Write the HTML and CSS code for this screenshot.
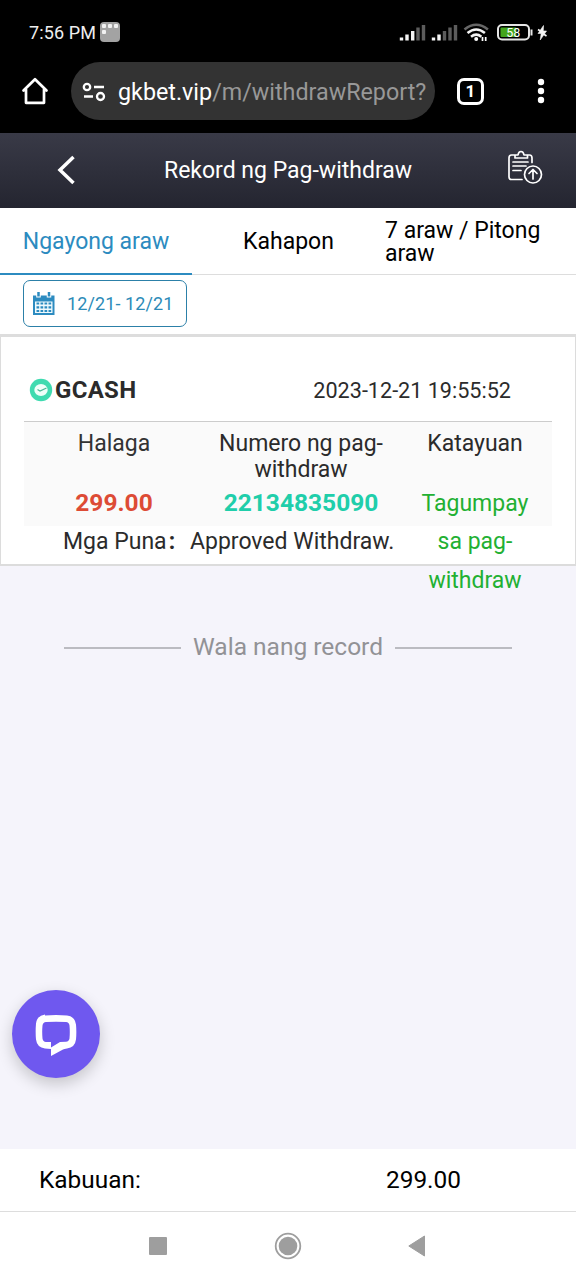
FILE: index.html
```html
<!DOCTYPE html>
<html lang="fil">
<head>
<meta charset="utf-8">
<title>Rekord ng Pag-withdraw</title>
<link rel="stylesheet" href="styles.css">
</head>
<body>
<div class="status">
  <span class="time">7:56 PM</span>
  <svg class="app" width="20" height="20" viewBox="0 0 20 20"><rect width="20" height="20" rx="4" fill="#a3a3a3"/><g fill="#f2f2f2"><rect x="2" y="2" width="4" height="4" rx="1"/><rect x="8" y="2" width="4" height="4" rx="1"/><rect x="14" y="2" width="4" height="4" rx="1"/><rect x="2" y="8" width="4" height="4" rx="1"/></g></svg>
  <svg class="signals" width="150" height="22" viewBox="398 21 150 22">
    <g stroke-width="3.400"><path stroke="#f4f4f4" d="M401.500 40.500v-3M407 40.500v-6M412.700 40.500v-9.500"/><path stroke="#5c5c5c" d="M418 40.500v-13M423.500 40.500v-15.500"/><path stroke="#f4f4f4" d="M433.500 40.500v-3M439 40.500v-6"/><path stroke="#5c5c5c" d="M444.500 40.500v-9.500M450 40.500v-13M455.500 40.500v-15.500"/></g>
    <g fill="none" stroke-width="2.600"><path stroke="#666" d="M464.500 29.500q11.700-9.500 23.400 0"/><path stroke="#f4f4f4" d="M467.500 33q8.700-7 17.400 0M471 36.700q5.200-4 10.400 0"/></g>
    <circle cx="476.200" cy="39" r="2" fill="#fff"/><path d="M482.500 41v-4M485.700 37v4" stroke="#fff" stroke-width="1.700"/>
    <rect x="498" y="25" width="31" height="14.500" rx="4" fill="none" stroke="#e6e6e6" stroke-width="2"/><rect x="500.500" y="27.500" width="16" height="9.500" rx="1" fill="#43a51c"/><path d="M531.500 29.500v6" stroke="#e6e6e6" stroke-width="2"/>
    <text class="battery" x="513.200" y="36.700" text-anchor="middle">58</text>
    <path d="M543.500 25.500l-5.500 8h3.200l-1 6.500 6.300-9h-3.200z" fill="#f4f4f4" stroke="#f4f4f4" stroke-width=".6"/><path d="M538 29.500l3 2M546.500 36l-3-2" stroke="#f4f4f4" stroke-width="1.600"/>
  </svg>
</div>
<div class="browser">
  <svg class="home" width="28" height="28" viewBox="0 0 28 28" fill="none" stroke="#fff" stroke-width="2.700" stroke-linejoin="round" stroke-linecap="round"><path d="M2.500 13.500L14 2.200l11.500 11.300M5 12.500v13.300h18V12.500"/></svg>
  <div class="address">
    <svg width="24" height="20" viewBox="0 0 24 20" fill="none" stroke="#fff" stroke-width="2.300"><circle cx="5" cy="5" r="3.200"/><path d="M12 5h10M2 14.500h9"/><circle cx="18.500" cy="14.500" r="3.500"/></svg>
    <span class="url">gkbet.vip<span class="path">/m/withdrawReport?</span></span>
  </div>
  <span class="tabcount">1</span>
  <svg class="more" width="8" height="26" viewBox="0 0 8 26" fill="#fff"><circle cx="4" cy="4" r="3.200"/><circle cx="4" cy="13" r="3.200"/><circle cx="4" cy="22" r="3.200"/></svg>
</div>
<header class="header">
  <svg width="20" height="30" viewBox="0 0 20 30" fill="none" stroke="#fff" stroke-width="3.500"><path d="M18.500 2L5 15l13.500 13"/></svg>
  <h1 class="title">Rekord ng Pag-withdraw</h1>
  <svg class="report" width="36" height="36" viewBox="0 0 36 36" fill="none" stroke="#fff" stroke-width="1.700" stroke-linecap="round" stroke-linejoin="round"><path d="M8 5H4.500Q2 5 2 8v19q0 2.500 2.500 2.500H15M21 5h1.500Q25 5 25 8v4.500M8 8V5h3q.5-3.500 3-3.500t3 3.500h3.500v3zM6 12h15M6 16h13M6 20.500h8"/><circle cx="26" cy="24.500" r="8.500"/><path d="M26 29v-9M22 23.500l4-4 4 4"/></svg>
</header>
<nav class="tabs">
  <a class="tab active">Ngayong araw</a><a class="tab">Kahapon</a><a class="tab week">7 araw / Pitong araw</a>
</nav>
<div class="filter">
  <div class="dates">
    <svg width="22" height="24" viewBox="0 0 22 24"><path d="M0 3.500h21.500v19.500H0z" fill="#2c8bc0"/><path d="M2 9.500h17.500V21H2z" fill="#f0fafd"/><path d="M5.500 1v4.500M16 1v4.500" stroke="#fff" stroke-width="4.500"/><path d="M5.500 0v4.500M16 0v4.500" stroke="#2c8bc0" stroke-width="2.500"/><path d="M3.500 11.500h15M3.500 15.300h15M3.500 19h15" stroke="#2c8bc0" stroke-width="2.200" stroke-dasharray="2.700 1.300"/></svg>
    <span class="range">12/21- 12/21</span>
  </div>
</div>
<main class="main">
  <section class="card">
    <div class="cardhead">
      <svg width="24" height="24" viewBox="0 0 24 24"><circle cx="12" cy="12" r="11.200" fill="#3fdbb0"/><ellipse cx="12" cy="12" rx="6.700" ry="6" fill="#effff9"/><path d="M8.500 11.500l2.500 1.500 6.500-3" fill="none" stroke="#49b897" stroke-width="1.300"/></svg>
      <strong>GCASH</strong><time>2023-12-21 19:55:52</time>
    </div>
    <div class="grid">
      <div class="col amount"><span class="label">Halaga</span><b>299.00</b></div>
      <div class="col number"><span class="label">Numero ng pag-withdraw</span><b>22134835090</b></div>
      <div class="col state"><span class="label">Katayuan</span><span class="result">Tagumpay<br>sa pag-<br>withdraw</span></div>
    </div>
    <div class="remark"><span>Mga Puna<span class="colon">:</span></span><span>Approved Withdraw.</span></div>
  </section>
  <div class="end">Wala nang record</div>
  <div class="chat"><svg width="44" height="44" viewBox="0 0 44 44"><path fill="#fff" fill-rule="evenodd" d="M11 3.500Q22 2.500 33 3.500q8 1 9 9 .7 7.500 0 15-1 8-9 9-3 .5-4 1L17 44v-7l-6-.5q-8-1-9-9-.7-8 0-16 1-8 9-9zm1 6.500q-3 .3-3.500 3.500-.6 6.500 0 13Q9 29.700 12 30h5v5.500L26 30l6-.3q3-.3 3.500-3.300.6-6.500 0-13Q35 10.300 32 10q-10-.7-20 0z"/></svg></div>
</main>
<footer class="total"><span>Kabuuan:</span><span class="sum">299.00</span></footer>
<div class="keys">
  <svg width="20" height="20" viewBox="0 0 20 20"><rect x="1" y="1" width="18" height="18" rx="1" fill="#9e9e9e"/></svg>
  <svg width="28" height="28" viewBox="0 0 28 28"><circle cx="14" cy="14" r="12.300" fill="none" stroke="#9e9e9e" stroke-width="1.800"/><circle cx="14" cy="14" r="9.300" fill="#9e9e9e"/></svg>
  <svg width="20" height="22" viewBox="0 0 20 22"><path d="M16.500 1v20L.8 11z" fill="#9e9e9e" stroke="#9e9e9e" stroke-linejoin="round"/></svg>
</div>
</body>
</html>
```
FILE: styles.css
```css
* { box-sizing: border-box; }
body { margin: 0; width: 576px; height: 1280px; display: flex; flex-direction: column; overflow: hidden; font-family: Roboto, "Liberation Sans", sans-serif; font-size: 23px; color: #2b2b2b; background: #fff; }
svg { display: block; flex: none; }
.status { height: 62px; background: #000; display: flex; align-items: center; padding: 2px 28px 0 29px; color: #eee; font-size: 18px; }
.time { width: 71px; white-space: nowrap; letter-spacing: .1px; }
.signals { margin-left: auto; }
.battery { font: 400 12.500px Roboto, sans-serif; fill: #fff; }
.browser { height: 71px; background: #000; display: flex; align-items: flex-start; padding-left: 21px; }
.home { margin-top: 15px; margin-right: 22px; }
.address { width: 364px; height: 58px; border-radius: 29px; background: #333; display: flex; align-items: center; padding: 2px 8px 0 11px; gap: 12px; color: #fff; }
.url { white-space: nowrap; overflow: hidden; font-size: 23.300px; line-height: 32px; width: 309px; }
.path { color: #989898; }
.tabcount { margin: 16px 0 0 22px; width: 27px; height: 27px; border: 3px solid #fff; border-radius: 7px; color: #fff; font-weight: 700; font-size: 17px; line-height: 21px; text-align: center; }
.more { margin: 16px 0 0 53px; }
.header { height: 75px; background: linear-gradient(#393a47, #242530); display: flex; align-items: center; padding: 0 33px 2px 55px; color: #fff; }
.title { flex: 1; margin: 0; padding-right: 6px; padding-top: 1px; text-align: center; font-size: 23px; font-weight: 400; }
.report { margin-top: -4px; }
.tabs { height: 67px; display: flex; border-bottom: 1px solid #ddd; color: #000; line-height: 23px; }
.tab { flex: none; width: 192px; display: flex; align-items: center; justify-content: center; padding: 1px 0 0 1px; }
.active { color: #2c8bc0; border-bottom: 2px solid #2c8bc0; margin-bottom: -1px; padding: 2px 0 0; }
.filter { height: 62px; padding: 5px 23px 0; border-bottom: 3px solid #ddd; }
.dates { width: 164px; height: 47px; border: 1px solid #2c80a8; border-radius: 7px; display: flex; align-items: center; padding-left: 9px; gap: 12px; color: #2c8bb8; font-size: 18px; letter-spacing: .1px; }
.range { margin-bottom: 1px; }
.main { position: relative; flex: 1; background: #f5f4fb; }
.card { height: 229px; background: #fff; border: solid #dcdcdc; border-width: 0 1px 2px; padding: 0 23px; }
.cardhead { height: 85px; padding: 22px 41px 0 5px; border-bottom: 1px solid #ccc; display: flex; align-items: center; }
.cardhead strong { font-size: 24px; margin-left: 2px; letter-spacing: .3px; }
.cardhead time { margin-left: auto; font-size: 21.600px; }
.grid { height: 104px; background: #fafafa; display: flex; text-align: center; line-height: 26px; font-size: 23px; }
.col { padding-top: 9px; display: flex; flex-direction: column; flex: none; }
.label { height: 52px; flex: none; }
.col b { font-size: 24.500px; line-height: 40px; }
.amount { width: 180px; color: #333; }
.amount b { color: #dd4b35; }
.number { width: 194px; }
.number b { color: #20ceaa; }
.state { width: 154px; }
.result { position: relative; line-height: 38.500px; flex: none; margin-top: 1.500px; color: #22b032; }
.remark { display: flex; padding: 2px 0 0 39px; line-height: 28px; }
.remark > span:first-child { width: 127px; }
.colon { margin-left: 2px; font-weight: 700; }
.end { margin-top: 66px; padding: 0 64px; display: flex; align-items: center; gap: 12px; color: #929296; font-size: 24.500px; line-height: 30px; white-space: nowrap; }
.end::before, .end::after { content: ""; flex: 1; height: 2px; margin-top: 2px; background: #bbbbc1; }
.chat { position: absolute; left: 12px; top: 653px; width: 88px; height: 88px; border-radius: 50%; background: #6f58ef; display: flex; align-items: center; justify-content: center; box-shadow: 0 6px 16px rgba(0,0,0,.2); }
.total { height: 63px; display: flex; align-items: center; padding: 0 0 2px 39px; color: #000; border-bottom: 1px solid #ddd; font-size: 24.400px; }
.sum { margin-left: auto; width: 190px; }
.keys { height: 68px; display: flex; align-items: center; padding-left: 148px; gap: 106px; }
```
